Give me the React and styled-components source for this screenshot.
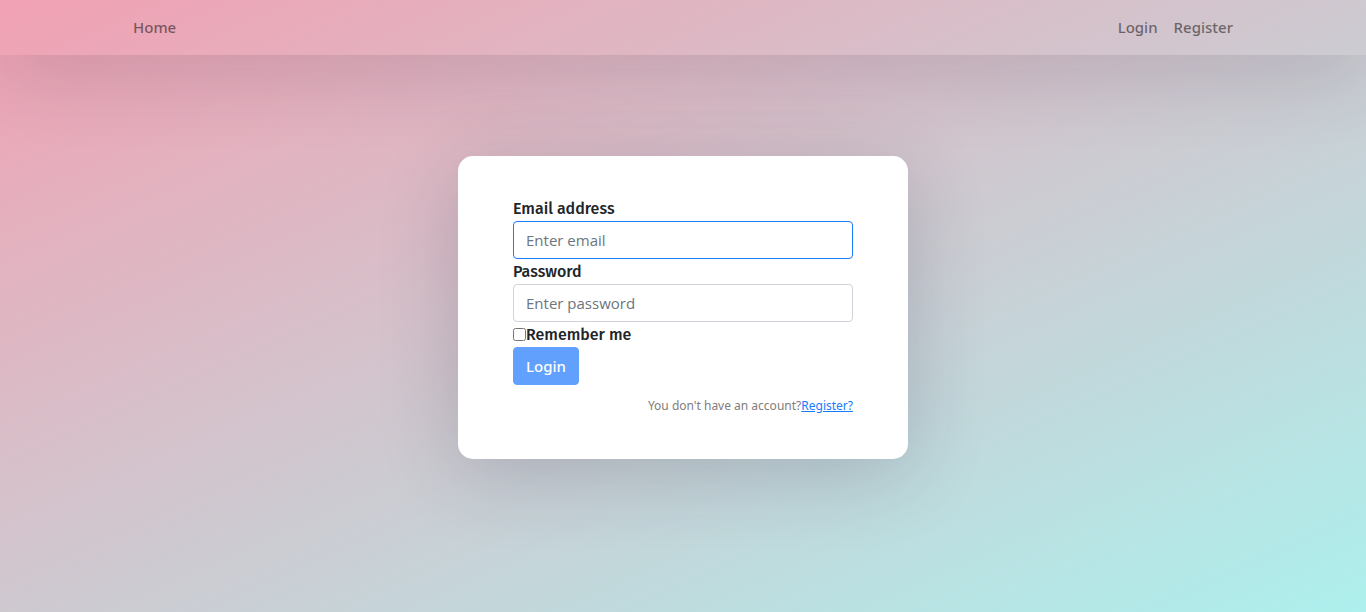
import React from "react";
import styled, { createGlobalStyle } from "styled-components";

const GlobalStyle = createGlobalStyle`
  *, *::before, *::after { box-sizing: border-box; }
  html { min-height: 100%; background: linear-gradient(to bottom right, #f1a1b3, #adf0ed) no-repeat; }
  body {
    margin: 0;
    color: #212529;
    font-family: "Segoe UI", "Noto Sans", "Open Sans", sans-serif;
    font-size: 15px;
    line-height: 24px;
  }
`;

const Page = styled.div`
  display: flex;
  flex-direction: column;
  min-height: 100vh;
`;

const Navbar = styled.header`
  display: flex;
  justify-content: center;
  min-height: 55px;
  box-shadow: 0 14px 80px rgba(34, 35, 58, 0.2);
`;

const NavContainer = styled.nav`
  display: flex;
  align-items: center;
  justify-content: space-between;
  width: 100%;
  max-width: 1140px;
  padding: 0 20px 2px;
`;

const NavGroup = styled.div`
  display: flex;
  gap: 16px;
`;

const NavLink = styled.a`
  color: rgba(0, 0, 0, 0.5);
  font-weight: 500;
  text-decoration: none;
`;

const Main = styled.main`
  display: flex;
  justify-content: center;
  padding: 101px 16px 40px;
`;

const Card = styled.form`
  width: 100%;
  max-width: 450px;
  padding: 40px 55px 43px;
  background: #fff;
  border-radius: 15px;
  box-shadow: 0 14px 80px rgba(34, 35, 58, 0.2);
`;

const Label = styled.label`
  display: block;
  font-family: "Fira Sans", "Noto Sans", sans-serif;
  font-size: 16px;
  font-weight: 500;
  line-height: 25px;
`;

const TextInput = styled.input`
  display: block;
  width: 100%;
  height: 38px;
  padding: 6px 12px;
  color: #212529;
  font: inherit;
  font-family: "Segoe UI", "Open Sans", "Noto Sans", sans-serif;
  background: #fff;
  border: 1px solid #ced4da;
  border-radius: 4px;
  outline: none;
  &::placeholder { color: #6c757d; opacity: 1; }
  &.active, &:focus { border-color: #167bff; }
`;

const CheckRow = styled.div`
  display: flex;
  align-items: center;
`;

const Checkbox = styled.input`
  width: 13px;
  height: 13px;
  margin: 0;
`;

const SubmitButton = styled.button`
  display: block;
  height: 38px;
  padding: 6px 12px;
  color: #fff;
  font: inherit;
  font-weight: 500;
  background: #0d6efd;
  border: 1px solid #0d6efd;
  border-radius: 4px;
  opacity: 0.65;
`;

const SignupHint = styled.p`
  margin: 0;
  padding-top: 10px;
  color: #7f7d7d;
  font-size: 12px;
  line-height: 21px;
  text-align: right;
  a { color: #167bff; }
`;

export default function App() {
  return (
    <>
      <GlobalStyle />
      <Page>
        <Navbar>
          <NavContainer>
            <NavLink href="#home">Home</NavLink>
            <NavGroup>
              <NavLink href="#login">Login</NavLink>
              <NavLink href="#register">Register</NavLink>
            </NavGroup>
          </NavContainer>
        </Navbar>
        <Main>
          <Card>
            <Label htmlFor="email">Email address</Label>
            <TextInput id="email" type="email" className="active" placeholder="Enter email" />
            <Label htmlFor="password">Password</Label>
            <TextInput id="password" type="password" placeholder="Enter password" />
            <CheckRow>
              <Checkbox id="remember" type="checkbox" />
              <Label htmlFor="remember">Remember me</Label>
            </CheckRow>
            <SubmitButton type="submit" disabled>Login</SubmitButton>
            <SignupHint>
              You don't have an account?<a href="#register">Register?</a>
            </SignupHint>
          </Card>
        </Main>
      </Page>
    </>
  );
}
